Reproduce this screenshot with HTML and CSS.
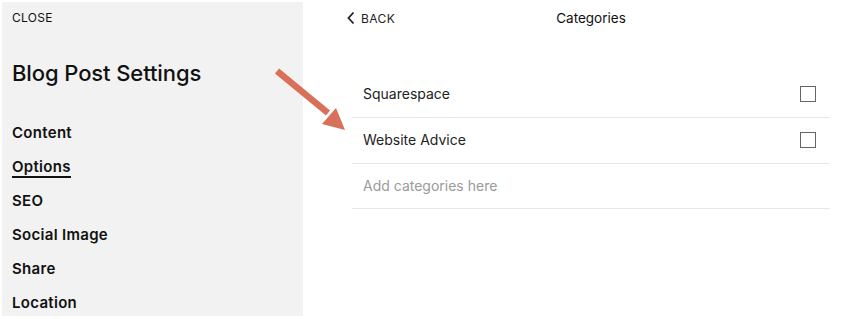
FILE: index.html
```html
<!DOCTYPE html>
<html>
<head>
<meta charset="utf-8">
<link rel="stylesheet" href="styles.css">
</head>
<body>
<div class="frame">
  <aside class="sidebar">
    <div class="close">CLOSE</div>
    <h1 class="title">Blog Post Settings</h1>
    <nav class="nav">
      <div class="nav-item">Content</div>
      <div class="nav-item active"><span>Options</span></div>
      <div class="nav-item">SEO</div>
      <div class="nav-item">Social Image</div>
      <div class="nav-item">Share</div>
      <div class="nav-item">Location</div>
    </nav>
  </aside>
  <main class="panel">
    <div class="content">
      <header class="header">
        <div class="back">
          <svg class="chev" width="10" height="14" viewBox="0 0 10 14"><path d="M7.5 1.5 L2.5 7 L7.5 12.5" fill="none" stroke="#222" stroke-width="1.8"/></svg>
          <span>BACK</span>
        </div>
        <div class="heading">Categories</div>
        <div></div>
      </header>
      <ul class="list">
        <li class="row"><span>Squarespace</span><span class="box"></span></li>
        <li class="row"><span>Website Advice</span><span class="box"></span></li>
        <li class="row placeholder"><span>Add categories here</span></li>
      </ul>
    </div>
  </main>
  <svg class="arrow" width="90" height="80" viewBox="0 0 90 80">
    <line x1="12" y1="11" x2="63" y2="53" stroke="#d8705a" stroke-width="6.5" stroke-linecap="butt"/>
    <polygon points="80,70 71,48 57,64" fill="#d8705a"/>
  </svg>
</div>
</body>
</html>
```
FILE: styles.css
```css
* { box-sizing: border-box; }
html, body { margin: 0; padding: 0; background: #fff; }
body {
  font-family: Inter, "Noto Sans", "Liberation Sans", sans-serif;
  color: #111;
  width: 842px;
  height: 319px;
  overflow: hidden;
}
.frame {
  position: relative;
  display: flex;
  padding: 2px 0 3px 2px;
  height: 319px;
}
.sidebar {
  width: 301px;
  background: #f2f2f2;
  padding: 9px 10px 0 10px;
}
.close {
  font-size: 12px;
  letter-spacing: 0.3px;
  line-height: 14px;
  color: #111;
}
.title {
  margin: 35px 0 0 0;
  font-size: 22px;
  font-weight: 500;
  line-height: 26px;
  letter-spacing: -0.1px;
}
.nav {
  margin-top: 37px;
  display: flex;
  flex-direction: column;
  gap: 14px;
}
.nav-item {
  font-size: 15px;
  font-weight: 600;
  line-height: 20px;
  letter-spacing: 0.3px;
}
.nav-item.active span {
  display: inline-block;
  border-bottom: 2px solid #111;
  line-height: 19px;
  margin-bottom: -1px;
}
.panel {
  flex: 1;
}
.content {
  margin-left: 49px;
  width: 478px;
}
.header {
  display: grid;
  grid-template-columns: 1fr auto 1fr;
  align-items: center;
  height: 32px;
}
.back {
  display: flex;
  align-items: center;
  gap: 5px;
  margin-left: -6px;
  font-size: 12px;
  color: #222;
  letter-spacing: 0.4px;
}
.chev { display: block; }
.heading {
  font-size: 13.5px;
  color: #111;
}
.list {
  list-style: none;
  margin: 38px 0 0 0;
  padding: 0;
}
.row {
  display: flex;
  align-items: center;
  justify-content: space-between;
  height: 46px;
  border-bottom: 1px solid #e6e6e6;
  padding: 0 14px 2px 11px;
  font-size: 14px;
  color: #222;
}
.row.placeholder { color: #9a9a9a; height: 45px; }
.box {
  width: 16px;
  height: 16px;
  border: 1.5px solid #666;
}
.arrow {
  position: absolute;
  left: 265px;
  top: 60px;
}
```
